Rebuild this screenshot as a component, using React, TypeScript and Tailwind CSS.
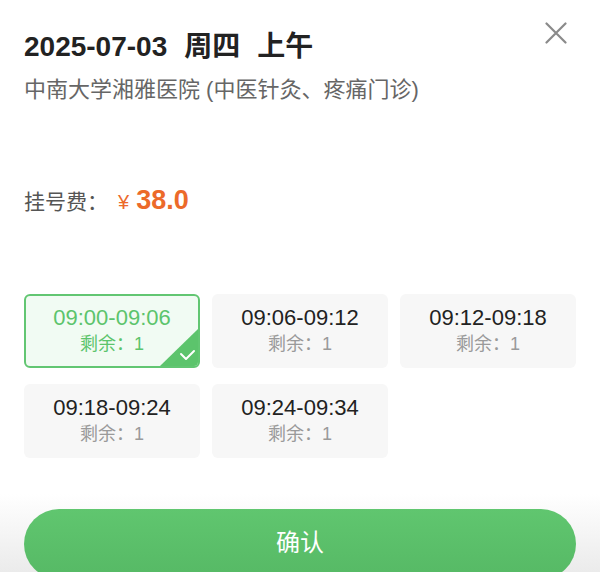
import React from 'react';

const FONT = { fontFamily: '"Liberation Sans", "Noto Sans CJK SC", sans-serif' };

type Slot = { time: string; left: number };

const SLOTS: Slot[] = [
    { time: '09:00-09:06', left: 1 },
    { time: '09:06-09:12', left: 1 },
    { time: '09:12-09:18', left: 1 },
    { time: '09:18-09:24', left: 1 },
    { time: '09:24-09:34', left: 1 },
];

const CloseIcon: React.FC = () => (
    <svg width="22" height="22" viewBox="0 0 22 22" fill="none">
        <path d="M1.5 1.5 L20.5 20.5 M20.5 1.5 L1.5 20.5" stroke="#8a8a8a" strokeWidth="2.2" strokeLinecap="round" />
    </svg>
);

const SlotCard: React.FC<{ slot: Slot; selected: boolean }> = ({ slot, selected }) => (
    <div
        className={
            selected
                ? 'relative h-[74px] pb-[3px] rounded-[6px] border-2 border-[#62c672] bg-[#f1fbf3] overflow-hidden flex flex-col items-center justify-center'
                : 'relative h-[74px] pb-[3px] rounded-[6px] bg-[#f7f7f7] flex flex-col items-center justify-center'
        }
    >
        <div className={selected ? 'text-[22px] leading-[24px] text-[#5cc46c]' : 'text-[22px] leading-[24px] text-[#222]'}>
            {slot.time}
        </div>
        <div className={selected ? 'mt-[4px] text-[18px] leading-[20px] text-[#5cc46c]' : 'mt-[4px] text-[18px] leading-[20px] text-[#9a9a9a]'}>
            剩余：{slot.left}
        </div>
        {selected && (
            <div className="absolute right-0 bottom-0 w-[38px] h-[37px]">
                <svg width="38" height="37" viewBox="0 0 38 37" className="absolute inset-0">
                    <polygon points="38,0 38,37 0,37" fill="#5cc46c" />
                    <path d="M21 25 L26 30 L34 22" stroke="#fff" strokeWidth="2" fill="none" strokeLinecap="round" strokeLinejoin="round" />
                </svg>
            </div>
        )}
    </div>
);

const App: React.FC = () => {
    return (
        <div className="relative w-[600px] h-[572px] overflow-hidden bg-white flex flex-col" style={FONT}>
            <button className="absolute right-[33px] top-[22px] w-[22px] h-[22px]">
                <CloseIcon />
            </button>

            <div className="px-6 pt-[33px]">
                <h1 className="text-[28px] leading-[28px] font-bold text-[#222] flex">
                    <span>2025-07-03</span>
                    <span className="ml-[17px]">周四</span>
                    <span className="ml-[17px]">上午</span>
                </h1>
                <p className="mt-[18px] text-[22px] leading-[22px] text-[#666]">中南大学湘雅医院 (中医针灸、疼痛门诊)</p>

                <div className="mt-[85px] flex items-baseline">
                    <span className="text-[21px] leading-[28px] text-[#555]">挂号费：</span>
                    <span className="ml-[10px] text-[20px] text-[#ec6a2a]">¥</span>
                    <span className="ml-[7px] text-[27px] leading-[28px] font-bold text-[#ec6a2a]">38.0</span>
                </div>

                <div className="mt-[77px] grid grid-cols-3 gap-x-3 gap-y-4">
                    {SLOTS.map((slot, i) => (
                        <SlotCard key={slot.time} slot={slot} selected={i === 0} />
                    ))}
                </div>
            </div>

            <div className="mt-auto h-[78px] pt-[15px] px-6 bg-gradient-to-b from-white to-[#ebebeb]">
                <button className="w-full h-[70px] rounded-full bg-gradient-to-b from-[#60c66f] to-[#56b965] text-white text-[24px] leading-[24px] pb-[3px]">
                    确认
                </button>
            </div>
        </div>
    );
};

export default App;
